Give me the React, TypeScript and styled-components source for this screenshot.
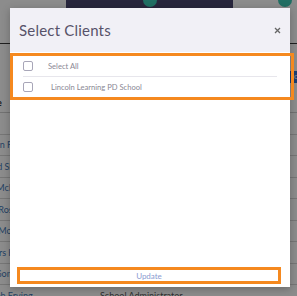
import styled, { createGlobalStyle } from 'styled-components'

const GlobalStyle = createGlobalStyle`
  html, body {
    margin: 0;
    padding: 0;
    background: #ffffff;
  }
  body {
    font-family: Lato, 'Noto Sans', sans-serif;
    overflow: hidden;
  }
`

type Member = {
  name: string
  role: string
}

const members: Member[] = [
  { name: 'Dalton Fry', role: 'Teacher' },
  { name: 'Alfred Shaw', role: 'Teacher' },
  { name: 'Joni McKay', role: 'Teacher' },
  { name: 'Elvis Ross', role: 'Teacher' },
  { name: 'Jane Moss', role: 'Teacher' },
  { name: 'Anders Holt', role: 'Teacher' },
  { name: 'Ava Gomez', role: 'Teacher' },
  { name: 'Joseph Erving', role: 'School Administrator' },
]

const Page = styled.div`
  position: relative;
  width: 297px;
  height: 296px;
  overflow: hidden;
`

const TopBar = styled.div`
  display: flex;
  align-items: flex-start;
  height: 43px;
  border-bottom: 1px solid #3a3a3a;
`

const NavBlock = styled.div`
  margin-left: 66px;
  width: 167px;
  height: 8px;
  background: #4a4670;
  display: flex;
  justify-content: center;
`

const Dot = styled.div`
  width: 14px;
  height: 14px;
  border-radius: 50%;
  background: #3cc9b5;
  margin-top: -7px;
`

const EdgeDot = styled(Dot)`
  margin-left: 45px;
`

const Toolbar = styled.div`
  display: flex;
  justify-content: flex-end;
  padding-top: 27px;
`

const AddButton = styled.div`
  width: 40px;
  height: 12px;
  margin-right: -35px;
  background: #2e6fd0;
  color: #ffffff;
  font-size: 8px;
  padding-left: 4px;
`

const Table = styled.div`
  margin-left: -22px;
  margin-top: 10px;
`

const HeadRow = styled.div`
  display: grid;
  grid-template-columns: 122px 1fr;
  height: 19px;
  align-items: center;
  font-size: 9px;
  font-weight: 700;
  color: #222;
  border-bottom: 1px solid #cfcfcf;
`

const Row = styled.div`
  display: grid;
  grid-template-columns: 122px 1fr;
  height: 20.5px;
  align-items: center;
  font-size: 9px;
  border-bottom: 1px solid #d8d8d8;
`

const NameCell = styled.span`
  color: #3f77b5;
`

const RoleCell = styled.span`
  color: #555;
`

const Overlay = styled.div`
  position: absolute;
  inset: 0;
  background: rgba(0, 0, 0, 0.45);
`

const Modal = styled.div`
  position: absolute;
  left: 10px;
  top: 8px;
  width: 280px;
  height: 279px;
  background: #ffffff;
  display: flex;
  flex-direction: column;
  box-shadow: 0 2px 8px rgba(0, 0, 0, 0.25);
`

const Header = styled.div`
  height: 44px;
  background: #f1f0f6;
  display: flex;
  align-items: center;
  justify-content: space-between;
  padding: 0 9px;
  flex-shrink: 0;
`

const Title = styled.h2`
  margin: 0;
  font-size: 15px;
  font-weight: 400;
  color: #575269;
  letter-spacing: 0.2px;
`

const Close = styled.button`
  border: 0;
  background: none;
  padding: 0;
  width: 7px;
  height: 7px;
  display: flex;
`

const Body = styled.div`
  flex: 1;
  display: flex;
  flex-direction: column;
  padding-top: 1px;
`

const ClientList = styled.div`
  border: 3px solid #f5891f;
  margin-right: -4px;
  padding: 0 14px 0 10px;
`

const ClientRow = styled.label<{ $divider?: boolean }>`
  display: flex;
  align-items: center;
  height: 20px;
  border-bottom: ${({ $divider }) => ($divider ? '1px solid #e7e6ec' : 'none')};
`

const Box = styled.span`
  width: 8px;
  height: 8px;
  border: 1px solid #a8a6b8;
  border-radius: 2px;
  flex-shrink: 0;
`

const ClientName = styled.span<{ $indent: number }>`
  margin-left: ${({ $indent }) => $indent}px;
  font-size: 7.6px;
  color: #8a8894;
`

const Spacer = styled.div`
  flex: 1;
`

const UpdateButton = styled.button`
  margin: 0 9px 3px 7px;
  height: 17px;
  border: 3px solid #f5891f;
  background: #ffffff;
  color: #8b9bd1;
  font-family: Lato, 'Noto Sans', sans-serif;
  font-size: 8px;
  padding: 0;
`

export default function App() {
  return (
    <>
      <GlobalStyle />
      <Page>
        <TopBar>
          <NavBlock>
            <Dot />
          </NavBlock>
          <EdgeDot />
        </TopBar>
        <Toolbar>
          <AddButton>lo</AddButton>
        </Toolbar>
        <Table>
          <HeadRow>
            <span>Name</span>
            <span>Role</span>
          </HeadRow>
          <Row />
          {members.map((m) => (
            <Row key={m.name}>
              <NameCell>{m.name}</NameCell>
              <RoleCell>{m.role}</RoleCell>
            </Row>
          ))}
        </Table>
        <Overlay />
        <Modal>
          <Header>
            <Title>Select Clients</Title>
            <Close aria-label="Close">
              <svg width="7" height="7" viewBox="0 0 7 7">
                <path d="M1 1L6 6M6 1L1 6" stroke="#666" strokeWidth="1.3" />
              </svg>
            </Close>
          </Header>
          <Body>
            <ClientList>
              <ClientRow $divider>
                <Box />
                <ClientName $indent={15}>Select All</ClientName>
              </ClientRow>
              <ClientRow>
                <Box />
                <ClientName $indent={18}>Lincoln Learning PD School</ClientName>
              </ClientRow>
            </ClientList>
            <Spacer />
            <UpdateButton>Update</UpdateButton>
          </Body>
        </Modal>
      </Page>
    </>
  )
}
